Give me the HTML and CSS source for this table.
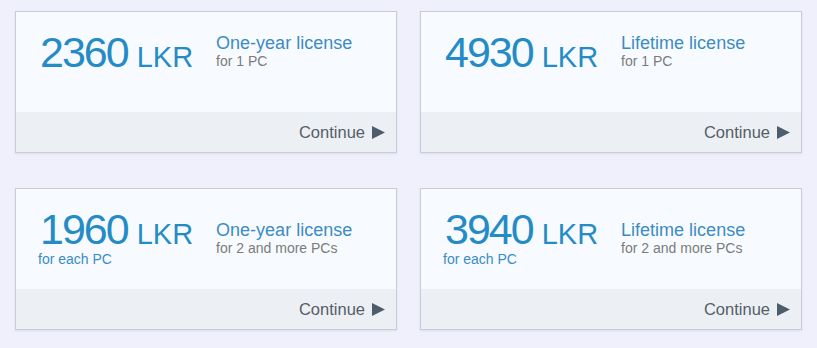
FILE: index.html
```html
<!DOCTYPE html>
<html>
<head>
<meta charset="utf-8">
<link rel="stylesheet" href="styles.css">
</head>
<body>
<div class="grid">
  <div class="card">
    <div class="card-body">
      <div class="row">
        <div class="price-block">
          <div class="price"><span class="amount">2360</span><span class="currency">LKR</span></div>
        </div>
        <div class="info">
          <div class="title">One-year license</div>
          <div class="sub">for 1 PC</div>
        </div>
      </div>
    </div>
    <div class="card-foot"><span class="continue">Continue</span><svg class="arrow" width="13" height="13" viewBox="0 0 13 13"><polygon points="0,0 13,6.5 0,13" /></svg></div>
  </div>
  <div class="card">
    <div class="card-body">
      <div class="row">
        <div class="price-block">
          <div class="price"><span class="amount">4930</span><span class="currency">LKR</span></div>
        </div>
        <div class="info">
          <div class="title">Lifetime license</div>
          <div class="sub">for 1 PC</div>
        </div>
      </div>
    </div>
    <div class="card-foot"><span class="continue">Continue</span><svg class="arrow" width="13" height="13" viewBox="0 0 13 13"><polygon points="0,0 13,6.5 0,13" /></svg></div>
  </div>
  <div class="card">
    <div class="card-body">
      <div class="row">
        <div class="price-block">
          <div class="price"><span class="amount">1960</span><span class="currency">LKR</span></div>
          <div class="each">for each PC</div>
        </div>
        <div class="info">
          <div class="title">One-year license</div>
          <div class="sub">for 2 and more PCs</div>
        </div>
      </div>
    </div>
    <div class="card-foot"><span class="continue">Continue</span><svg class="arrow" width="13" height="13" viewBox="0 0 13 13"><polygon points="0,0 13,6.5 0,13" /></svg></div>
  </div>
  <div class="card">
    <div class="card-body">
      <div class="row">
        <div class="price-block">
          <div class="price"><span class="amount">3940</span><span class="currency">LKR</span></div>
          <div class="each">for each PC</div>
        </div>
        <div class="info">
          <div class="title">Lifetime license</div>
          <div class="sub">for 2 and more PCs</div>
        </div>
      </div>
    </div>
    <div class="card-foot"><span class="continue">Continue</span><svg class="arrow" width="13" height="13" viewBox="0 0 13 13"><polygon points="0,0 13,6.5 0,13" /></svg></div>
  </div>
</div>
</body>
</html>
```
FILE: styles.css
```css
html, body {
  margin: 0;
  padding: 0;
  background: #eff0fc;
  font-family: "Liberation Sans", Arial, sans-serif;
}
.grid {
  display: grid;
  grid-template-columns: 382px 382px;
  column-gap: 23px;
  row-gap: 35px;
  padding: 11px 15px;
}
.card {
  border: 1px solid #c9cbd8;
  box-shadow: 0 1px 2px rgba(0, 0, 0, 0.08);
  background: #f7fbff;
  display: flex;
  flex-direction: column;
}
.card-body {
  height: 100px;
  box-sizing: border-box;
  padding: 19px 0 0 22px;
}
.row {
  display: flex;
  align-items: center;
}
.price-block {
  display: flex;
  flex-direction: column;
}
.price {
  display: flex;
  align-items: baseline;
  color: #258bc7;
  line-height: 43px;
  height: 40px;
  padding-left: 2px;
}
.amount {
  font-size: 43px;
  letter-spacing: -2px;
}
.currency {
  font-size: 29px;
  margin-left: 9px;
}
.each {
  font-size: 14px;
  line-height: 16px;
  color: #3a8dc4;
  margin-top: 3px;
}
.info {
  margin-left: 23px;
}
.title {
  font-size: 18px;
  line-height: 20px;
  color: #3d8bc3;
}
.sub {
  font-size: 14px;
  line-height: 16px;
  color: #7b7b7b;
}
.card-foot {
  height: 40px;
  box-sizing: border-box;
  background: #ecf0f4;
  display: flex;
  justify-content: flex-end;
  align-items: center;
  padding: 0 11px 0 0;
}
.continue {
  font-size: 16.5px;
  line-height: 18px;
  color: #555e68;
}
.arrow {
  margin-left: 7px;
  fill: #4d5d6c;
}
```
